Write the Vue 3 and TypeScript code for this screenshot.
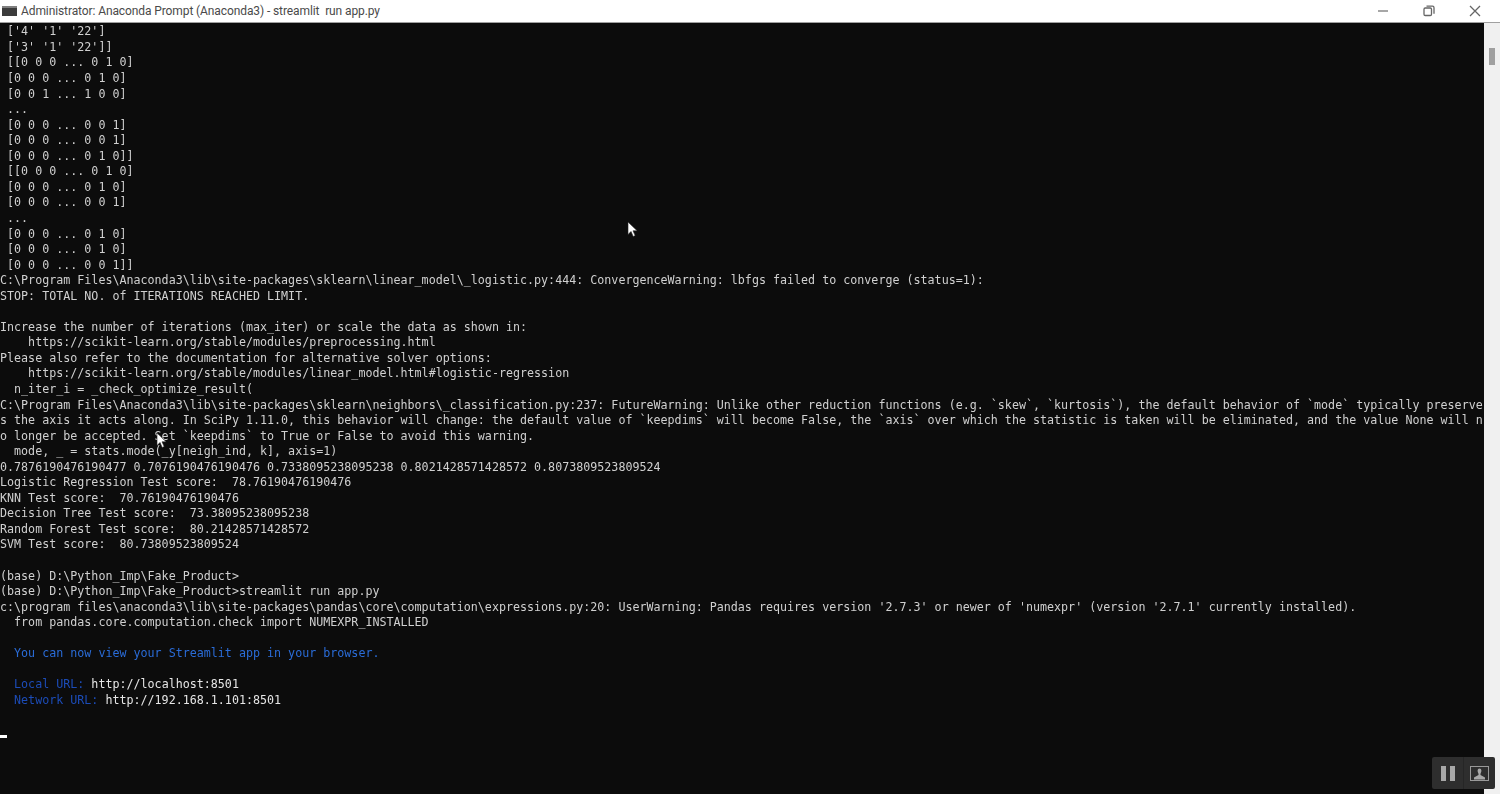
<script setup lang="ts">
interface Seg { t: string; c?: string }
const plain = ` ['4' '1' '22']
 ['3' '1' '22']]
 [[0 0 0 ... 0 1 0]
 [0 0 0 ... 0 1 0]
 [0 0 1 ... 1 0 0]
 ...
 [0 0 0 ... 0 0 1]
 [0 0 0 ... 0 0 1]
 [0 0 0 ... 0 1 0]]
 [[0 0 0 ... 0 1 0]
 [0 0 0 ... 0 1 0]
 [0 0 0 ... 0 0 1]
 ...
 [0 0 0 ... 0 1 0]
 [0 0 0 ... 0 1 0]
 [0 0 0 ... 0 0 1]]
C:\\Program Files\\Anaconda3\\lib\\site-packages\\sklearn\\linear_model\\_logistic.py:444: ConvergenceWarning: lbfgs failed to converge (status=1):
STOP: TOTAL NO. of ITERATIONS REACHED LIMIT.

Increase the number of iterations (max_iter) or scale the data as shown in:
    https://scikit-learn.org/stable/modules/preprocessing.html
Please also refer to the documentation for alternative solver options:
    https://scikit-learn.org/stable/modules/linear_model.html#logistic-regression
  n_iter_i = _check_optimize_result(
C:\\Program Files\\Anaconda3\\lib\\site-packages\\sklearn\\neighbors\\_classification.py:237: FutureWarning: Unlike other reduction functions (e.g. \`skew\`, \`kurtosis\`), the default behavior of \`mode\` typically preserve
s the axis it acts along. In SciPy 1.11.0, this behavior will change: the default value of \`keepdims\` will become False, the \`axis\` over which the statistic is taken will be eliminated, and the value None will n
o longer be accepted. Set \`keepdims\` to True or False to avoid this warning.
  mode, _ = stats.mode(_y[neigh_ind, k], axis=1)
0.7876190476190477 0.7076190476190476 0.7338095238095238 0.8021428571428572 0.8073809523809524
Logistic Regression Test score:  78.76190476190476
KNN Test score:  70.76190476190476
Decision Tree Test score:  73.38095238095238
Random Forest Test score:  80.21428571428572
SVM Test score:  80.73809523809524

(base) D:\\Python_Imp\\Fake_Product>
(base) D:\\Python_Imp\\Fake_Product>streamlit run app.py
c:\\program files\\anaconda3\\lib\\site-packages\\pandas\\core\\computation\\expressions.py:20: UserWarning: Pandas requires version '2.7.3' or newer of 'numexpr' (version '2.7.1' currently installed).
  from pandas.core.computation.check import NUMEXPR_INSTALLED
`.split('\n')

const lines: Seg[][] = plain.map((t) => [{ t }])
lines.push([{ t: '  You can now view your Streamlit app in your browser.', c: 'blue' }])
lines.push([{ t: '' }])
lines.push([{ t: '  Local URL: ', c: 'dim' }, { t: 'http://localhost:8501', c: 'bright' }])
lines.push([{ t: '  Network URL: ', c: 'dim' }, { t: 'http://192.168.1.101:8501', c: 'bright' }])
</script>

<template>
  <div class="window">
    <header class="titlebar">
      <svg class="appicon" width="15" height="10" viewBox="0 0 15 10">
        <rect width="15" height="10" fill="#3c3c3c" />
        <rect width="15" height="2" fill="#808080" />
      </svg>
      <span class="title">Administrator: Anaconda Prompt (Anaconda3) - streamlit&nbsp; run app.py</span>
      <div class="controls">
        <svg width="12" height="12" viewBox="0 0 12 12"><path d="M1 6h10" stroke="#777" stroke-width="1.3" /></svg>
        <svg width="12" height="12" viewBox="0 0 12 12" fill="none" stroke="#666" stroke-width="1.3"><rect x="1" y="3" width="7.5" height="7.5" rx="1.2" /><path d="M3.5 1.2h6a1.5 1.5 0 0 1 1.5 1.5v6" /></svg>
        <svg width="12" height="12" viewBox="0 0 12 12"><path d="M1 1l10 10M11 1L1 11" stroke="#666" stroke-width="1.3" /></svg>
      </div>
    </header>
    <div class="body">
      <main class="term">
        <div v-for="(line, i) in lines" :key="i" class="line"><span v-for="(s, j) in line" :key="j" :class="s.c">{{ s.t }}</span></div>
        <div class="cursorline"><span class="caret"></span></div>
      </main>
      <aside class="scroll"><div class="thumb"></div></aside>
    </div>

    <svg class="pointer p1" width="12" height="17" viewBox="0 0 12 17"><path d="M1 1v12.5l3-3 2.2 5 2-.9-2.2-4.8h4.2z" fill="#fff" stroke="#222" stroke-width=".6" /></svg>
    <svg class="pointer p2" width="12" height="17" viewBox="0 0 12 17"><path d="M1 1v12.5l3-3 2.2 5 2-.9-2.2-4.8h4.2z" fill="#fff" stroke="#222" stroke-width=".6" /></svg>

    <div class="player">
      <div class="pbtn">
        <svg width="14" height="15" viewBox="0 0 14 15"><rect x="0" y="0" width="5" height="15" fill="#a8a8a8" /><rect x="9" y="0" width="5" height="15" fill="#a8a8a8" /></svg>
      </div>
      <div class="pbtn">
        <svg width="19" height="15" viewBox="0 0 19 15"><rect x=".5" y=".5" width="18" height="14" fill="none" stroke="#999" /><path d="M7.6 4.5a1.9 1.9 0 0 1 3.8 0c0 1.4-.5 2.4-.9 3.2v1.2l4.5 2.6v2H4v-2l4.5-2.6V7.700c-.4-.8-.9-1.800-.9-3.200z" fill="#a8a8a8" /></svg>
      </div>
    </div>
  </div>
</template>

<style>
html, body { margin: 0; background: #0c0c0c; overflow: hidden; }
</style>

<style scoped>
.window {
  width: 1500px;
  height: 794px;
  display: flex;
  flex-direction: column;
  position: relative;
  overflow: hidden;
}
.titlebar {
  height: 22px;
  flex: none;
  background: #fff;
  border-bottom: 1px solid #a0a0a0;
  display: flex;
  align-items: center;
  padding-left: 2px;
  font-family: Roboto, "Noto Sans", sans-serif;
  font-size: 12px;
  letter-spacing: -0.1px;
  color: #4a4a4a;
}
.appicon { flex: none; margin-right: 4px; }
.title { white-space: pre; }
.controls {
  margin-left: auto;
  display: flex;
  gap: 34px;
  padding-right: 19px;
  align-items: center;
}
.body { flex: 1; display: flex; min-height: 0; }
.term {
  flex: 1;
  background: #0c0c0c;
  color: #d0d0d0;
  font-family: "DejaVu Sans Mono", "Liberation Mono", monospace;
  font-size: 11.685px;
  padding-top: 1.4px;
  overflow: hidden;
  filter: blur(0.4px);
}
.line {
  height: 15.56px;
  line-height: 15.56px;
  white-space: pre;
}
.blue { color: #2a6cd8; }
.dim { color: #1c4cb8; }
.bright { color: #e6e6e6; }
.cursorline { height: 15.56px; position: relative; margin-top: 15.56px; }
.caret {
  display: block;
  position: absolute;
  left: 0;
  top: 11px;
  width: 7px;
  height: 3px;
  background: #fff;
}
.scroll {
  width: 16px;
  flex: none;
  background: #f0f0f0;
  padding: 25px 5px 0 5px;
  box-sizing: border-box;
}
.thumb { width: 6px; height: 17px; background: #a0a0a0; }
.pointer { position: absolute; }
.p1 { left: 627px; top: 221px; }
.p2 { left: 156px; top: 432px; }
.player {
  position: absolute;
  left: 1432px;
  top: 757px;
  height: 32px;
  display: flex;
  background: #2e2e2e;
  border-radius: 2px;
}
.pbtn {
  width: 31px;
  display: flex;
  align-items: center;
  justify-content: center;
}
.pbtn + .pbtn { border-left: 1px solid #262626; }
</style>
